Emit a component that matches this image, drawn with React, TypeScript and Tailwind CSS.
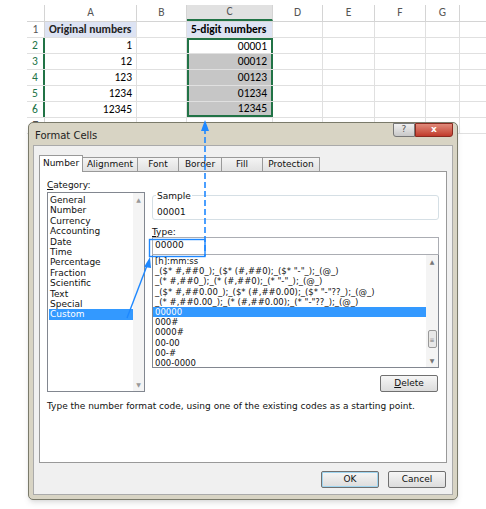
import React from 'react';

const cols = [
    { l: '', w: 18 }, { l: 'A', w: 92 }, { l: 'B', w: 50 }, { l: 'C', w: 86 },
    { l: 'D', w: 50 }, { l: 'E', w: 52 }, { l: 'F', w: 51 }, { l: 'G', w: 34 },
];
const rows: [string, string, string][] = [
    ['1', 'Original numbers', '5-digit numbers'],
    ['2', '1', '00001'], ['3', '12', '00012'], ['4', '123', '00123'],
    ['5', '1234', '01234'], ['6', '12345', '12345'], ['7', '', ''],
];
const cats = ['General', 'Number', 'Currency', 'Accounting', 'Date', 'Time', 'Percentage', 'Fraction', 'Scientific', 'Text', 'Special', 'Custom'];
const codes = ['[h]:mm:ss', '_($* #,##0_);_($* (#,##0);_($* "-"_);_(@_)', '_(* #,##0_);_(* (#,##0);_(* "-"_);_(@_)',
    '_($* #,##0.00_);_($* (#,##0.00);_($* "-"??_);_(@_)', '_(* #,##0.00_);_(* (#,##0.00);_(* "-"??_);_(@_)',
    '00000', '000#', '0000#', '00-00', '00-#', '000-0000'];
const tabs = ['Number', 'Alignment', 'Font', 'Border', 'Fill', 'Protection'];
const tabW = [44, 56, 42, 44, 42, 58];

function Sheet() {
    return (
        <div className="ml-[27px] pt-[5px] text-[11.5px]" style={{ fontFamily: 'Calibri, Carlito, "Liberation Sans", sans-serif' }}>
            <div className="flex h-[17px] border-b border-[#d4d4d4]">
                {cols.map((c, i) => (
                    <div key={i} style={{ width: c.w }}
                        className={`flex items-center justify-center border-r border-[#d4d4d4] text-[#555] ${c.l === 'C' ? 'bg-[#e1e1e1] border-b-2 border-b-[#217346]' : ''}`}>{c.l}</div>
                ))}
            </div>
            {rows.map(([r, a, c], ri) => (
                <div key={r} className="flex h-[16px] border-b border-[#e0e0e0]">
                    <div style={{ width: 18 }} className={`flex items-center justify-center text-[#555] border-r ${ri >= 1 && ri <= 5 ? 'border-r-2 border-r-[#217346] text-[#217346]' : 'border-[#d4d4d4]'}`}>{r}</div>
                    <div style={{ width: 92 }} className={`flex items-center px-1 border-r border-[#e0e0e0] ${ri === 0 ? 'bg-[#dde3f3] font-bold text-[#222]' : 'justify-end'}`}>{a}</div>
                    <div style={{ width: 50 }} className="border-r border-[#e0e0e0]" />
                    <div style={{ width: 86 }} className={`flex items-center px-1 ${ri === 0 ? 'bg-[#dde3f3] font-bold' : 'justify-end'} ${ri >= 1 && ri <= 5 ? 'border-x-2 border-[#217346]' : 'border-r border-[#e0e0e0]'} ${ri >= 2 && ri <= 5 ? 'bg-[#c6c6c6]' : ''} ${ri === 1 ? 'border-t-2 bg-white' : ''} ${ri === 5 ? 'border-b-2' : ''}`}>{c}</div>
                    {[50, 52, 51, 34].map((w, k) => <div key={k} style={{ width: w }} className="border-r border-[#e0e0e0]" />)}
                </div>
            ))}
        </div>
    );
}

function Btn({ children, cls = '' }: { children: React.ReactNode; cls?: string }) {
    return (
        <div className={`flex items-center justify-center h-[17px] w-[58px] rounded-[2px] border border-[#707070] bg-gradient-to-b from-[#f6f6f6] to-[#dcdcdc] text-[9px] text-[#111] ${cls}`}>{children}</div>
    );
}

function Dialog() {
    return (
        <div className="absolute left-[28px] top-[122px] w-[430px] h-[378px] rounded-[5px] border border-[#7a7a6a] bg-[#d8d4c4] p-[4px] pt-0 shadow-md text-[9px] text-[#111]"
            style={{ fontFamily: 'Tahoma, "DejaVu Sans", "Liberation Sans", sans-serif' }}>
            <div className="flex items-start h-[22px] pl-[2px]">
                <span className="text-[10px] text-[#222] mt-[5px]">Format Cells</span>
                <div className="ml-auto flex">
                    <div className="w-[22px] h-[14px] border border-[#777] rounded-bl-[3px] bg-gradient-to-b from-[#f0f0f0] to-[#c8c8c8] flex items-center justify-center text-[#555] text-[9px]">?</div>
                    <div className="w-[38px] h-[14px] border border-[#8a2a20] rounded-br-[3px] bg-gradient-to-b from-[#e08a7a] to-[#c0392b] flex items-center justify-center text-white font-bold text-[9px]">x</div>
                </div>
            </div>
            <div className="bg-[#f0f0f0] border border-[#aaa] h-[350px] px-[5px] pt-[9px]">
                <div className="flex items-end h-[17px]">
                    {tabs.map((t, i) => (
                        <div key={t} style={{ width: tabW[i] }}
                            className={`flex items-center justify-center border border-[#999] border-b-0 ${i === 0 ? 'h-[17px] bg-white relative z-10' : 'h-[15px] bg-gradient-to-b from-[#f4f4f4] to-[#e0e0e0] -ml-px'}`}>{t}</div>
                    ))}
                </div>
                <div className="bg-white border border-[#999] -mt-px h-[292px] px-[7px] pt-[7px] relative">
                    <div className="flex gap-[7px]">
                        <div className="w-[98px]">
                            <div className="h-[13px]"><u>C</u>ategory:</div>
                            <div className="border border-[#828790] h-[200px] flex">
                                <div className="flex-1 pt-[2px] pl-[1px] leading-[10.4px]">
                                    {cats.map(c => <div key={c} className={`pl-[1px] ${c === 'Custom' ? 'bg-[#3399ff] text-white' : ''}`}>{c}</div>)}
                                </div>
                                <div className="w-[11px] bg-[#f4f4f4] flex flex-col justify-between items-center text-[6px] text-[#999] py-[2px]"><span>▲</span><span>▼</span></div>
                            </div>
                        </div>
                        <div className="flex-1 pt-[16px]">
                            <div className="border border-[#d5dfe5] rounded-[3px] h-[25px] px-[4px] relative">
                                <span className="absolute -top-[6px] left-[3px] bg-white px-[1px]">Sample</span>
                                <div className="pt-[10px]">00001</div>
                            </div>
                            <div className="mt-[6px] h-[11px]"><u>T</u>ype:</div>
                            <div className="border border-[#abadb3] h-[18px] flex items-center px-[2px]">00000</div>
                            <div className="border border-[#828790] border-t-0 h-[113px] flex">
                                <div className="flex-1 pt-[1px] leading-[10.2px] text-[8.5px] overflow-hidden whitespace-nowrap">
                                    {codes.map((c, i) => <div key={i} className={`pl-[2px] ${c === '00000' ? 'bg-[#3399ff] text-white' : ''}`}>{c}</div>)}
                                </div>
                                <div className="w-[12px] bg-[#f4f4f4] flex flex-col items-center text-[6px] text-[#777] py-[2px]">
                                    <span>▲</span>
                                    <div className="mt-auto mb-[8px] w-[9px] h-[18px] border border-[#999] rounded-[2px] bg-[#e8e8e8] flex items-center justify-center text-[6px]">≡</div>
                                    <span>▼</span>
                                </div>
                            </div>
                            <div className="flex justify-end mt-[7px] pr-[1px]"><Btn><u>D</u>elete</Btn></div>
                        </div>
                    </div>
                    <div className="mt-[8px]">Type the number format code, using one of the existing codes as a starting point.</div>
                </div>
                <div className="flex justify-end gap-[9px] mt-[8px] pr-[1px]">
                    <Btn cls="border-[#3c7fb1] shadow-[inset_0_0_0_1px_#9fd5f0]">OK</Btn>
                    <Btn>Cancel</Btn>
                </div>
            </div>
        </div>
    );
}

export default function App() {
    return (
        <div className="relative w-[486px] h-[509px] bg-white overflow-hidden">
            <Sheet />
            <Dialog />
            <svg className="absolute inset-0 pointer-events-none" width="486" height="509">
                <line x1="205" y1="128" x2="205" y2="256" stroke="#1e88ff" strokeWidth="1.6" strokeDasharray="6 3" />
                <polygon points="205,120 201,131 209,131" fill="#1e88ff" />
                <rect x="149.5" y="239.5" width="55.5" height="17" fill="none" stroke="#1e88ff" strokeWidth="1.4" />
                <line x1="127" y1="318" x2="148" y2="263" stroke="#1e88ff" strokeWidth="1.4" />
                <polygon points="150,257 144,267 151,268" fill="#1e88ff" />
            </svg>
        </div>
    );
}
